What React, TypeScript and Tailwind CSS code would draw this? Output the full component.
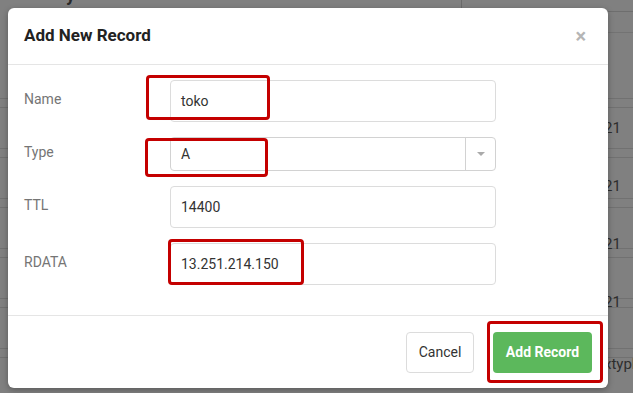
import React from 'react';

const font = { fontFamily: 'Roboto, "Liberation Sans", sans-serif' };

const lines = [98, 107, 148, 157, 198, 207, 248, 257, 298, 307, 348, 357];
const cells = [
  { y: 119, t: '21' },
  { y: 177, t: '21' },
  { y: 235, t: '21' },
  { y: 293, t: '21' },
  { y: 355, t: 'xtypl' },
];

const Backdrop: React.FC = () => {
  return (
    <div className="absolute inset-0 bg-[#808080]">
      {/* faint underlying table lines */}
      <div className="absolute left-[461px] top-0 h-[11px] w-px bg-[#6a6a6a]" />
      <div className="absolute left-[461px] right-0 top-[11px] h-px bg-[#6e6e6e]" />
      <div className="absolute left-[608px] right-0 top-[32px] h-px bg-[#737373]" />
      {lines.map((y) => (
        <div key={y} className="absolute left-0 right-0 h-px bg-[#717171]" style={{ top: y }} />
      ))}
      {cells.map((c) => (
        <span key={c.y} className="absolute left-[604px] text-[15px] leading-[18px] text-[#2e2e2e]" style={{ top: c.y }}>
          {c.t}
        </span>
      ))}
      <span className="absolute left-[66px] top-[-19px] text-[18px] font-bold text-[#2a2a2a]">y</span>
    </div>
  );
};

const Field: React.FC<{ label: string; value: string; select?: boolean }> = ({ label, value, select }) => (
  <div className="flex items-center">
    <label className="-mt-[4px] w-[146px] text-[14px] text-[#757575]">{label}</label>
    {select ? (
      <div className="flex h-[34px] w-[326px] items-center rounded-[4px] border border-[#d2d2d2] bg-white">
        <span className="flex-1 pl-[10px] text-[14px] text-[#333]">{value}</span>
        <span className="flex h-full w-[30px] items-center justify-center border-l border-[#d2d2d2]">
          <span className="h-0 w-0 border-x-[4px] border-t-[4px] border-x-transparent border-t-[#aaa]" />
        </span>
      </div>
    ) : (
      <div className="flex h-[42px] w-[326px] items-center rounded-[4px] border border-[#dcdcdc] bg-white pl-[10px] text-[14px] text-[#333]">
        {value}
      </div>
    )}
  </div>
);

const App: React.FC = () => {
  return (
    <div className="relative h-[393px] w-[633px] overflow-hidden" style={font}>
      <Backdrop />

      {/* Modal */}
      <div className="absolute left-[8px] top-[8px] flex h-[380px] w-[600px] flex-col rounded-[6px] bg-white shadow-[0_2px_6px_rgba(0,0,0,0.3)]">
        <div className="flex h-[57px] items-center justify-between border-b border-[#e5e5e5] px-[16px] pb-[1px]">
          <h2 className="text-[17px] font-bold text-[#222]">Add New Record</h2>
          <span className="mr-[6px] text-[20px] font-bold leading-none text-[#b5b5b5]">×</span>
        </div>

        <div className="flex flex-col gap-[15px] px-[16px] pb-[30px] pt-[15px]">
          <Field label="Name" value="toko" />
          <Field label="Type" value="A" select />
          <Field label="TTL" value="14400" />
          <Field label="RDATA" value="13.251.214.150" />
        </div>

        <div className="flex flex-1 items-center justify-end gap-[19px] border-t border-[#e5e5e5] pr-[16px]">
          <button className="h-[41px] w-[68px] rounded-[4px] border border-[#dcdcdc] bg-white text-[14px] text-[#333]">
            Cancel
          </button>
          <button className="h-[41px] w-[99px] rounded-[4px] bg-[#5cb85c] text-[14px] font-bold text-white">
            Add Record
          </button>
        </div>

        {/* annotation boxes */}
        <div className="absolute left-[138px] top-[67px] h-[45px] w-[124px] rounded-[4px] border-[3px] border-[#c40000]" />
        <div className="absolute left-[137px] top-[130px] h-[39px] w-[123px] rounded-[4px] border-[3px] border-[#c40000]" />
        <div className="absolute left-[160px] top-[231px] h-[46px] w-[136px] rounded-[4px] border-[3px] border-[#c40000]" />
        <div className="absolute left-[479px] top-[313px] h-[62px] w-[116px] rounded-[4px] border-[3px] border-[#c40000]" />
      </div>
    </div>
  );
};

export default App;
